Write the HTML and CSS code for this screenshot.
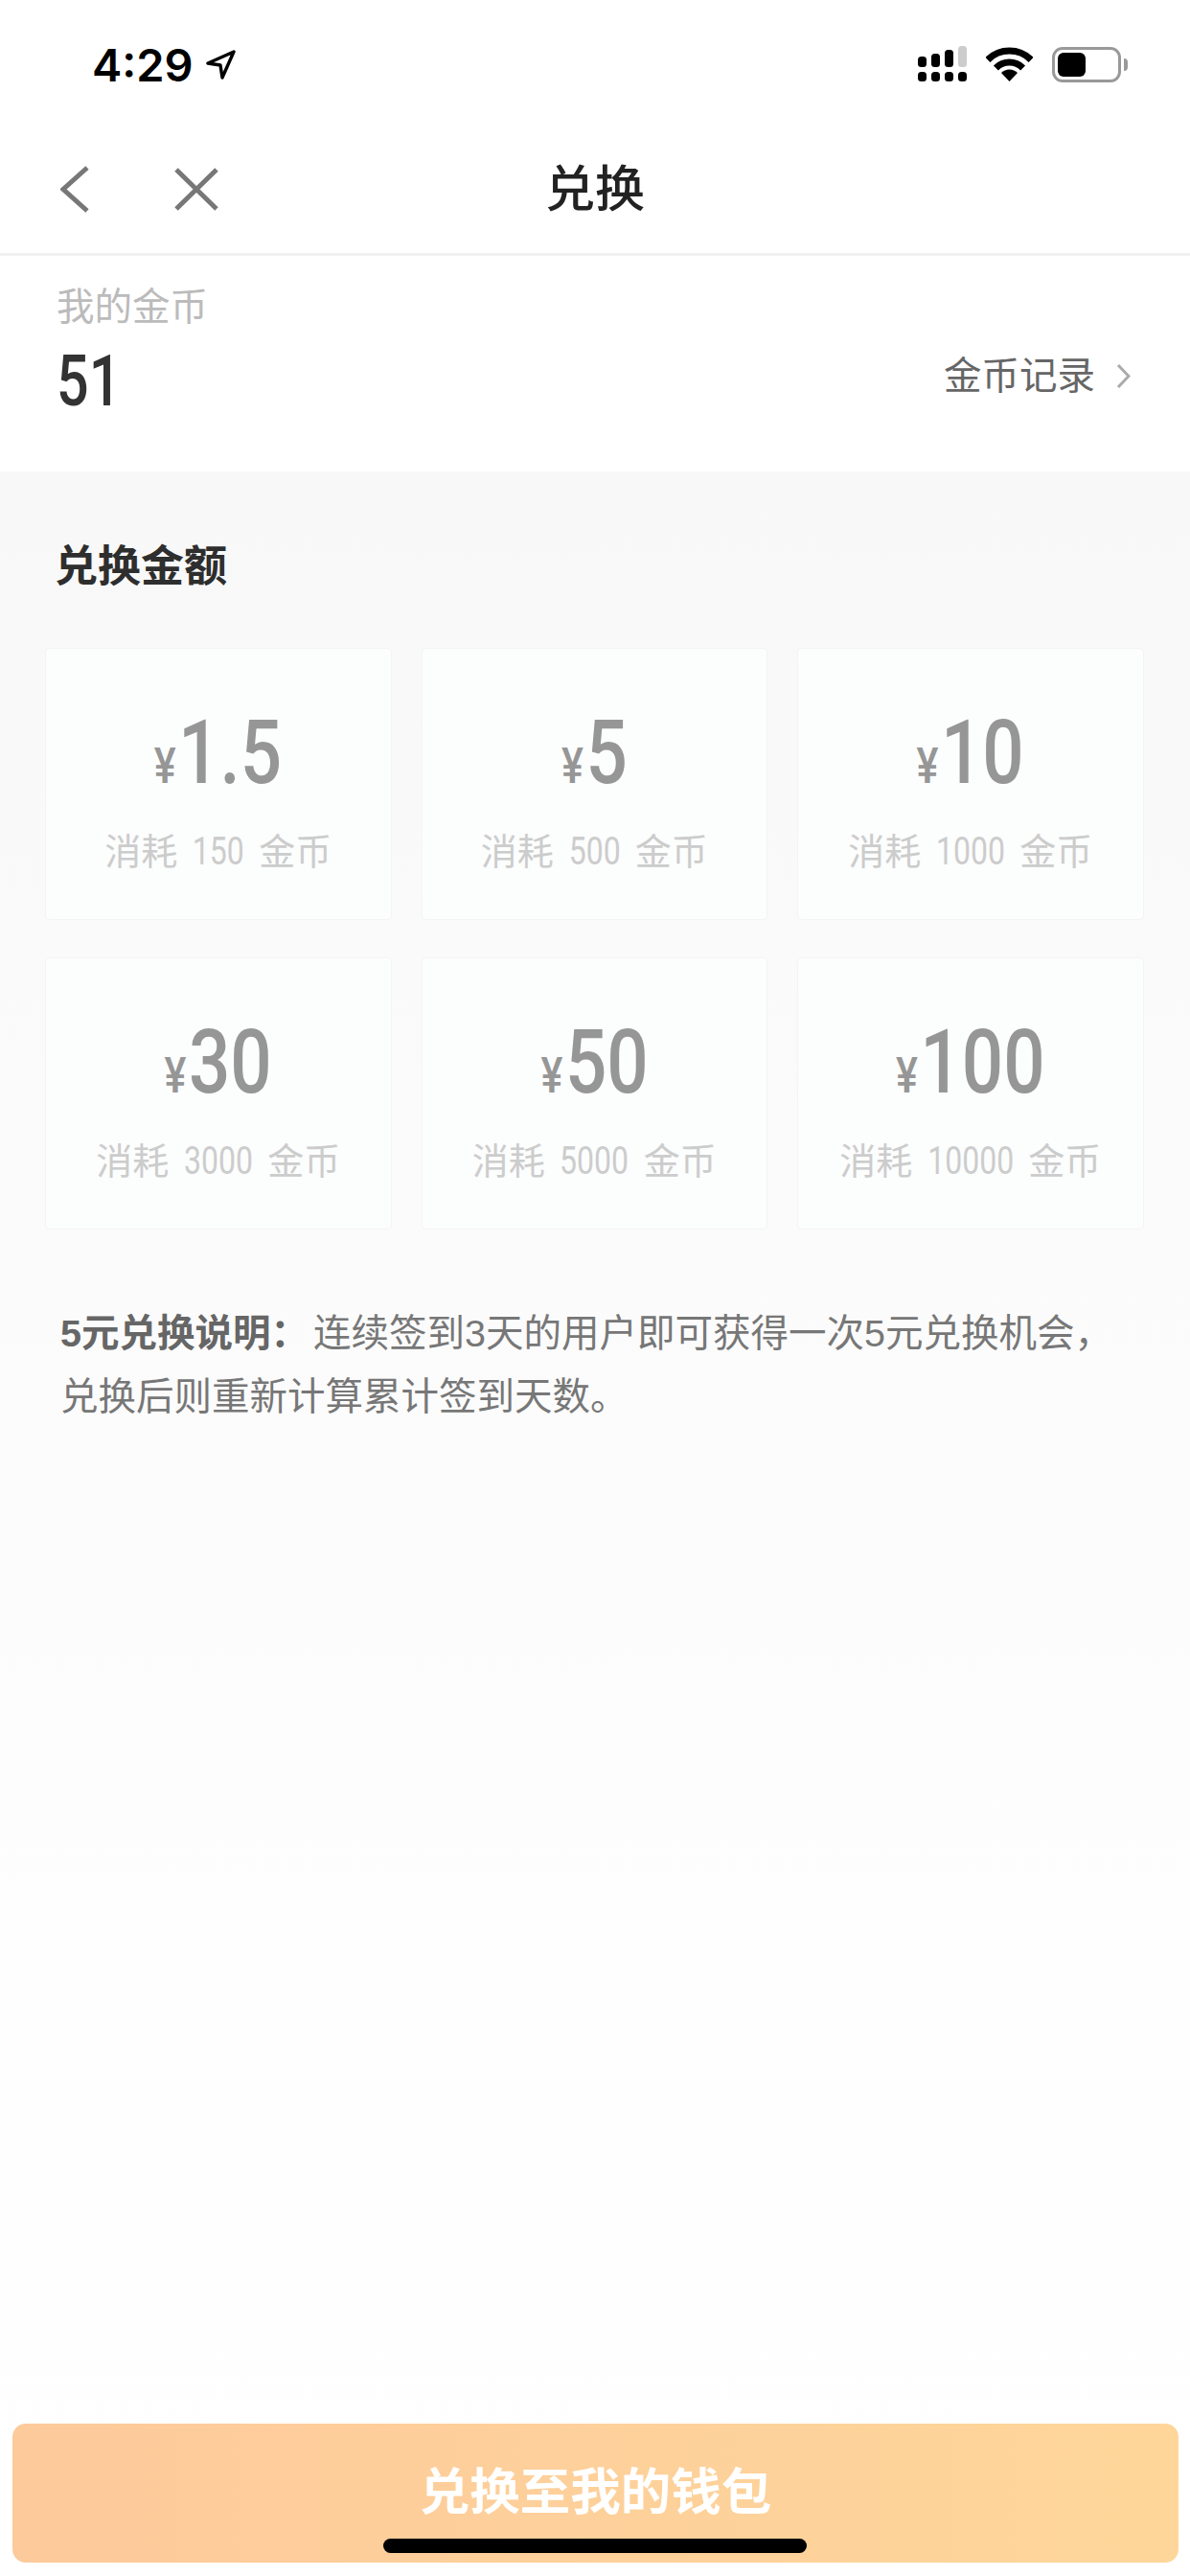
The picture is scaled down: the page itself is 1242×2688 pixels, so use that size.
FILE: index.html
```html
<!DOCTYPE html>
<html lang="zh-CN">
<head>
  <meta charset="UTF-8">
  <title>兑换</title>
  <link rel="stylesheet" href="styles.css">
</head>
<body>
<div class="app">
  <!-- status bar -->
  <div class="status">
    <div class="status-left">
      <span class="time">4:29</span>
      <svg class="arrow" width="32" height="31" viewBox="0 0 32 31"><path d="M30 2 L3 14 L16 16 L18 29 Z" fill="none" stroke="#000" stroke-width="3.4" stroke-linejoin="round"/></svg>
    </div>
    <div class="status-right">
      <svg class="signal" width="51" height="37" viewBox="0 0 51 37">
        <rect x="0" y="11" width="9" height="11" rx="3.5"/>
        <rect x="14" y="8" width="9" height="14" rx="3.5"/>
        <rect x="28" y="4" width="9" height="18" rx="3.5"/>
        <rect x="42" y="0" width="9" height="22" rx="3.5" fill="#ccc"/>
        <rect x="0" y="27" width="9" height="10" rx="3.5"/>
        <rect x="14" y="27" width="9" height="10" rx="3.5"/>
        <rect x="28" y="27" width="9" height="10" rx="3.5"/>
        <rect x="42" y="27" width="9" height="10" rx="3.5"/>
      </svg>
      <svg class="wifi" width="49" height="36" viewBox="0 0 49 36">
        <path d="M1.9 13.4 A32 32 0 0 1 47.1 13.4" fill="none" stroke="#000" stroke-width="7"/>
        <path d="M10.4 21.9 A20 20 0 0 1 38.6 21.9" fill="none" stroke="#000" stroke-width="7"/>
        <path d="M24.5 36 L16 27 A12 12 0 0 1 33 27 Z"/>
      </svg>
      <div class="battery"><div class="battery-fill"></div></div>
      <div class="battery-nub"></div>
    </div>
  </div>

  <!-- nav -->
  <div class="nav">
    <div class="nav-left">
      <svg width="30" height="49" viewBox="0 0 30 49"><path d="M28 2 L3 24.5 L28 47" fill="none" stroke="#777" stroke-width="5"/></svg>
      <svg width="46" height="45" viewBox="0 0 46 45"><path d="M2 2 L44 43 M44 2 L2 43" fill="none" stroke="#777" stroke-width="5"/></svg>
    </div>
    <div class="nav-title">兑换</div>
    <div></div>
  </div>

  <!-- coins -->
  <div class="coins">
    <div class="coins-label">我的金币</div>
    <div class="coins-row">
      <div class="coins-value">51</div>
      <div class="coins-link">
        金币记录
        <svg width="15" height="27" viewBox="0 0 15 27"><path d="M2 2 L13 13.5 L2 25" fill="none" stroke="#aaa" stroke-width="3"/></svg>
      </div>
    </div>
  </div>

  <!-- exchange -->
  <div class="main">
    <h3 class="main-title">兑换金额</h3>
    <div class="cards">
      <div class="card"><div class="amount"><span class="yen">¥</span>1.5</div><div class="cost">消耗 <span class="num n3">150</span> 金币</div></div>
      <div class="card"><div class="amount"><span class="yen">¥</span>5</div><div class="cost">消耗 <span class="num n3">500</span> 金币</div></div>
      <div class="card"><div class="amount"><span class="yen">¥</span>10</div><div class="cost">消耗 <span class="num n4">1000</span> 金币</div></div>
      <div class="card"><div class="amount"><span class="yen">¥</span>30</div><div class="cost">消耗 <span class="num n4">3000</span> 金币</div></div>
      <div class="card"><div class="amount"><span class="yen">¥</span>50</div><div class="cost">消耗 <span class="num n4">5000</span> 金币</div></div>
      <div class="card"><div class="amount"><span class="yen">¥</span>100</div><div class="cost">消耗 <span class="num n5">10000</span> 金币</div></div>
    </div>
    <p class="note"><b>5元兑换说明：</b>连续签到3天的用户即可获得一次5元兑换机会，<br>兑换后则重新计算累计签到天数。</p>
    <div class="spacer"></div>
    <div class="submit">兑换至我的钱包</div>
  </div>
  <div class="home-bar"></div>
</div>
</body>
</html>
```
FILE: styles.css
```css
* {
  box-sizing: border-box;
}
body {
  margin: 0;
  background: #fff;
  font-family: "Liberation Sans", "Noto Sans CJK SC", sans-serif;
}
.app {
  position: relative;
  width: 1242px;
  height: 2688px;
  display: flex;
  flex-direction: column;
  overflow: hidden;
}
.status {
  height: 130px;
  padding: 48px 65px 0 96px;
  display: flex;
  justify-content: space-between;
  align-items: flex-start;
}
.status-left {
  display: flex;
  align-items: flex-start;
  gap: 12px;
}
.time {
  font-family: Inter, sans-serif;
  font-size: 47px;
  font-weight: 600;
  line-height: 40px;
}
.arrow {
  margin-top: 4px;
}
.status-right {
  display: flex;
  align-items: flex-start;
}
.wifi {
  margin: 1px 20px 0 20px;
}
.battery {
  width: 72px;
  height: 37px;
  margin-top: 1px;
  padding: 3px;
  border: 3px solid #999;
  border-radius: 11px;
}
.battery-fill {
  width: 29px;
  height: 25px;
  background: #000;
  border-radius: 6px;
}
.battery-nub {
  width: 4px;
  height: 13px;
  margin: 13px 0 0 3px;
  background: #999;
  border-radius: 0 4px 4px 0;
}
.nav {
  height: 137px;
  padding-left: 63px;
  display: grid;
  grid-template-columns: 1fr auto 1fr;
  align-items: center;
  border-bottom: 3px solid #f1f1f1;
}
.nav-left {
  display: flex;
  align-items: center;
  gap: 89px;
}
.nav-left svg {
  display: block;
}
.nav-title {
  font-size: 52px;
  font-weight: 500;
  color: #222;
  line-height: 60px;
  margin: 2px 0 0 -63px;
}
.coins {
  height: 225px;
  padding: 28px 62px 0 59px;
}
.coins-label {
  font-size: 39.5px;
  line-height: 50px;
  color: #bbb;
}
.coins-row {
  display: flex;
  justify-content: space-between;
  align-items: center;
  margin-top: 8px;
}
.coins-value {
  font-family: Roboto, sans-serif;
  font-size: 74px;
  font-weight: 500;
  line-height: 90px;
  color: #333;
  transform: scaleX(.8);
  transform-origin: left center;
}
.coins-link {
  display: flex;
  align-items: center;
  gap: 22px;
  font-size: 39.5px;
  line-height: 50px;
  color: #666;
  margin-top: -12px;
}
.main {
  flex: 1;
  padding-top: 70px;
  display: flex;
  flex-direction: column;
  background: linear-gradient(180deg, #f8f8f8 0%, #fdfdfd 60%, #fff 100%);
}
.main-title {
  margin: 0 0 54px 57px;
  font-size: 45px;
  font-weight: 700;
  line-height: 60px;
  color: #2e2e2e;
}
.cards {
  padding-left: 47px;
  display: grid;
  grid-template-columns: repeat(3, 361.5px);
  grid-auto-rows: 284px;
  column-gap: 31px;
  row-gap: 39px;
}
.card {
  display: flex;
  flex-direction: column;
  align-items: center;
  padding-top: 64px;
  background: #fcfdfd;
  border: 1.5px solid #f4f4f4;
  border-radius: 4px;
}
/* no condensed face installed, so the digits get squeezed */
.amount {
  font-family: Roboto, sans-serif;
  font-size: 92px;
  font-weight: 500;
  line-height: 90px;
  color: #969696;
  transform: scaleX(.83);
}
.yen {
  font-size: 52px;
  margin-right: 3px;
}
.cost {
  margin-top: 19px;
  font-size: 38px;
  line-height: 50px;
  word-spacing: 5px;
  color: #ccc;
}
.num {
  display: inline-block;
  font-family: Roboto, sans-serif;
  font-size: 40px;
  transform: scaleX(.8);
}
.n3 { margin: 0 -.168em; }
.n4 { margin: 0 -.224em; }
.n5 { margin: 0 -.28em; }
.note {
  margin: 75px 0 0 63px;
  font-size: 39.5px;
  line-height: 66px;
  color: #777;
}
.note b {
  font-weight: 700;
  color: #666;
  margin-right: 5px;
}
.spacer {
  flex: 1;
}
.submit {
  height: 145px;
  margin: 0 12px 14px 13px;
  display: flex;
  justify-content: center;
  padding-top: 40px;
  font-size: 52.5px;
  font-weight: 700;
  line-height: 64px;
  color: #fff;
  background: linear-gradient(90deg, #fdca9b 0%, #fed69a 100%);
  border-radius: 14px;
}
.home-bar {
  position: absolute;
  left: 400px;
  top: 2649px;
  width: 442px;
  height: 15px;
  background: #000;
  border-radius: 8px;
}
```
